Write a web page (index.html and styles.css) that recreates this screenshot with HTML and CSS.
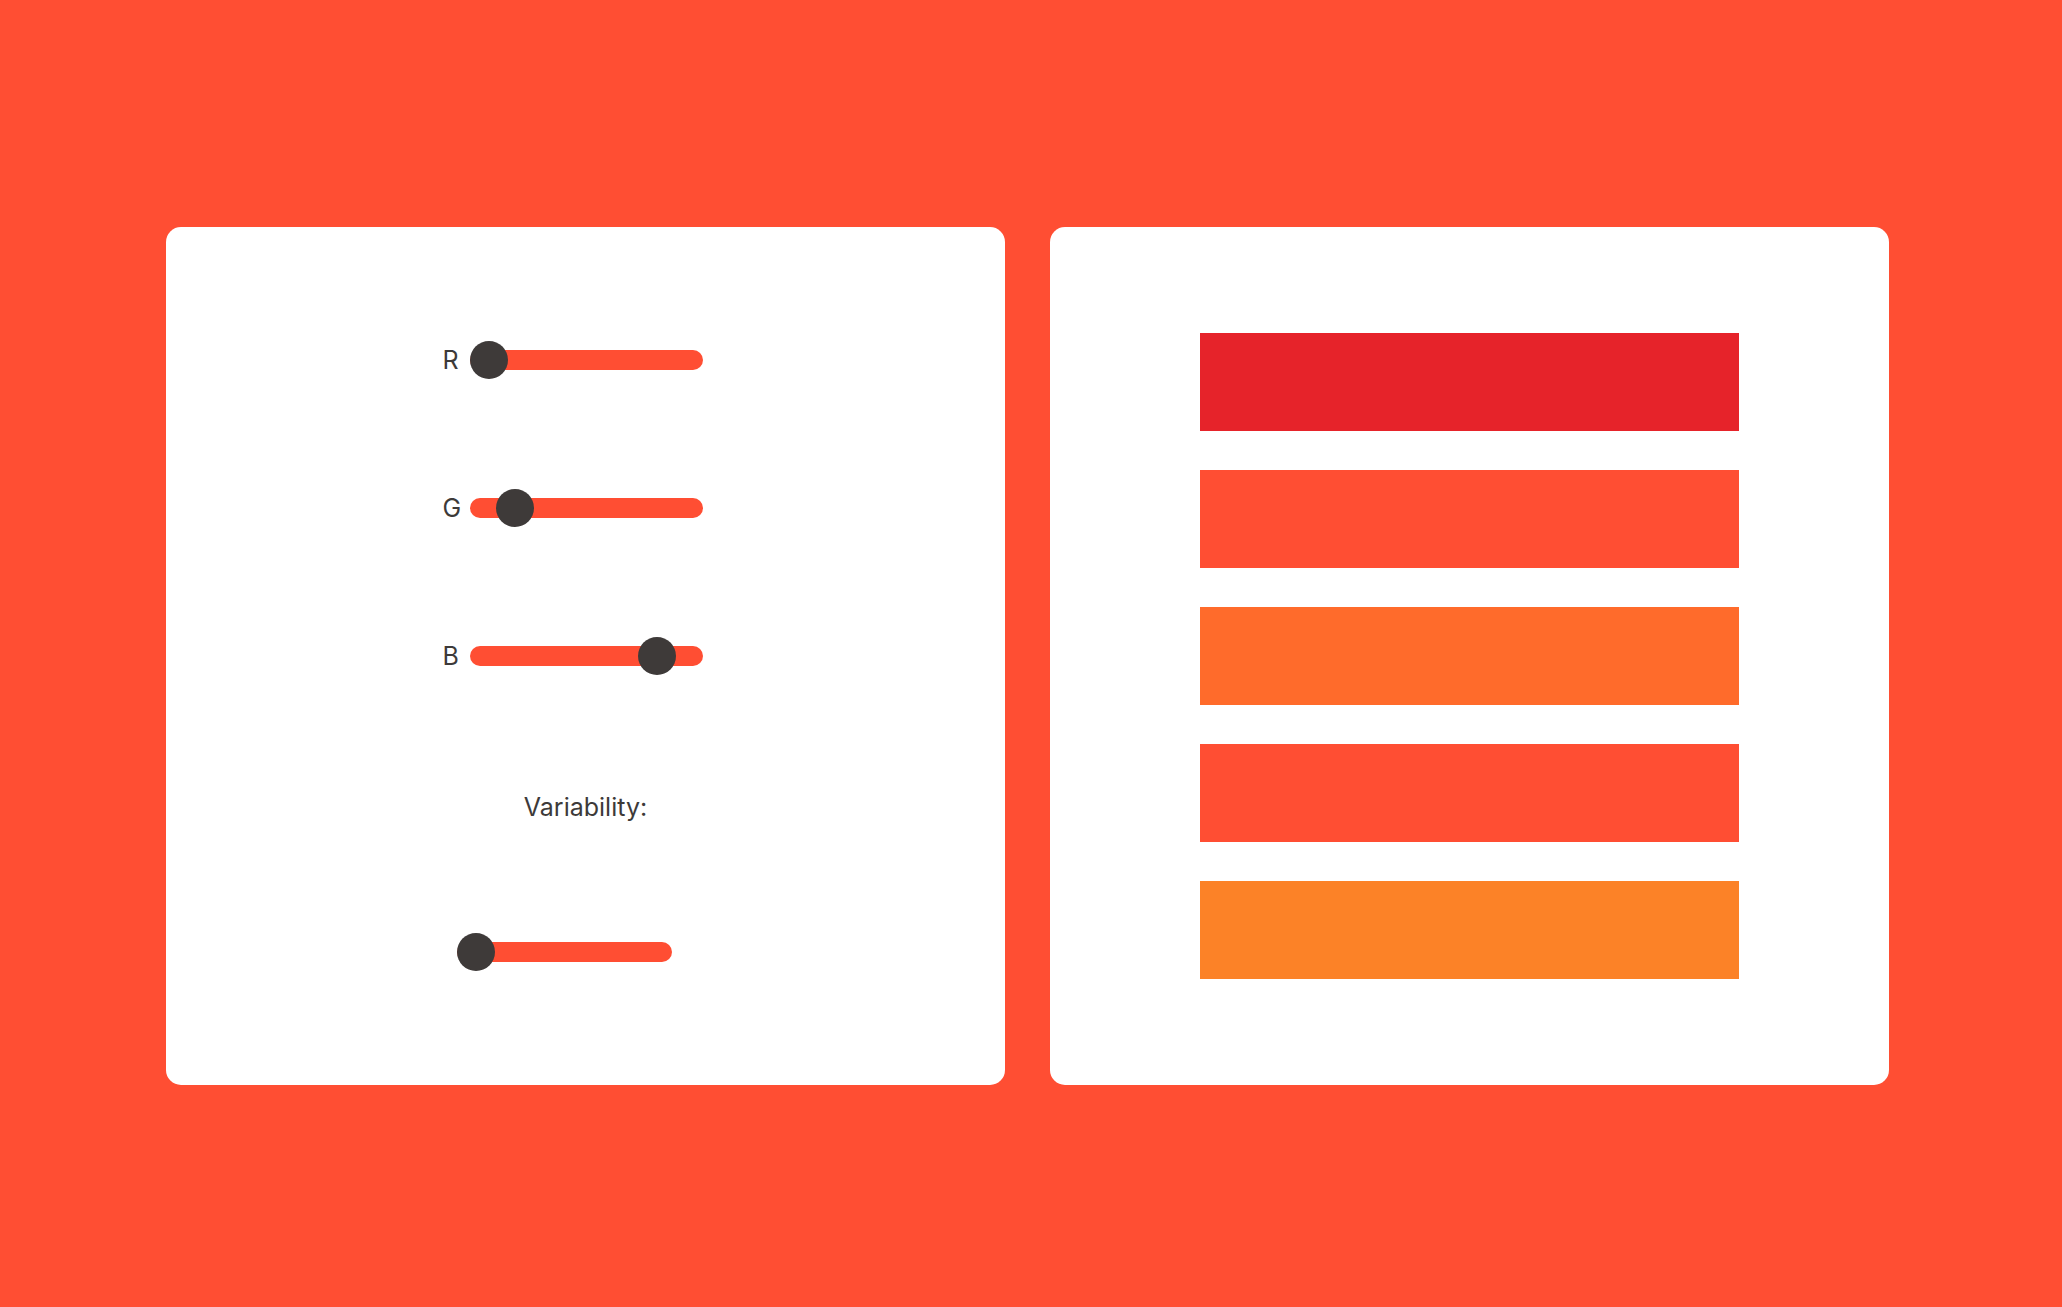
FILE: index.html
```html
<!DOCTYPE html>
<html lang="en">
<head>
    <meta charset="UTF-8">
    <meta name="viewport" content="width=device-width, initial-scale=1.0">
    <title>Palette Generator</title>
    <link rel="stylesheet" href="styles.css">
</head>
<body>
    <div class="wrapper">
        <div class="card controls">
            <div class="slider-row">
                <label for="red">R</label>
                <input type="range" id="red" min="0" max="255" value="0" class="r-slider">
            </div>
            <div class="slider-row">
                <label for="green">G</label>
                <input type="range" id="green" min="0" max="255" value="35" class="g-slider">
            </div>
            <div class="slider-row">
                <label for="blue">B</label>
                <input type="range" id="blue" min="0" max="255" value="220" class="b-slider">
            </div>
            <div class="variability-label">Variability:</div>
            <div class="slider-row var-row">
                <input type="range" id="variability" min="0" max="100" value="0" class="v-slider">
            </div>
        </div>

        <div class="card palette">
            <div class="swatch" style="background: #e6232a;"></div>
            <div class="swatch" style="background: #ff4e33;"></div>
            <div class="swatch" style="background: #ff6b2b;"></div>
            <div class="swatch" style="background: #ff4e33;"></div>
            <div class="swatch" style="background: #fc8227;"></div>
        </div>
    </div>
</body>
</html>
```

FILE: styles.css
```css
* {
    box-sizing: border-box;
}

body {
    font-family: Inter, "Liberation Sans", sans-serif;
    margin: 0;
    background: #ff4e33;
    color: #3d3a39;
    height: 1307px;
    overflow: hidden;
}

.wrapper {
    display: flex;
    gap: 45px;
    padding: 227px 0 0 166px;
}

.card {
    width: 839px;
    height: 858px;
    background: #fff;
    border-radius: 15px;
}

/* left card */
.controls {
    display: flex;
    flex-direction: column;
    align-items: center;
    padding-top: 113px;
    gap: 108px;
}

.slider-row {
    width: 286px;
    height: 40px;
    display: flex;
    align-items: center;
    gap: 11px;
}

.slider-row label {
    font-size: 25px;
    width: 16px;
    line-height: 1;
}

.var-row {
    padding-left: 14px;
}

.variability-label {
    height: 40px;
    line-height: 40px;
    font-size: 25px;
    text-align: center;
    padding-top: 3px;
}

input[type=range] {
    -webkit-appearance: none;
    appearance: none;
    width: 233px;
    height: 20px;
    margin: 0;
    border-radius: 10px;
    background: #ff4e33;
    outline: none;
}

input.v-slider {
    width: 215px;
}

input[type=range]::-webkit-slider-thumb {
    -webkit-appearance: none;
    width: 38px;
    height: 38px;
    border-radius: 50%;
    background: #3e3a39;
    cursor: pointer;
}

/* right card */
.palette {
    display: flex;
    flex-direction: column;
    align-items: center;
    justify-content: center;
    gap: 39px;
}

.swatch {
    width: 539px;
    height: 98px;
}
```
